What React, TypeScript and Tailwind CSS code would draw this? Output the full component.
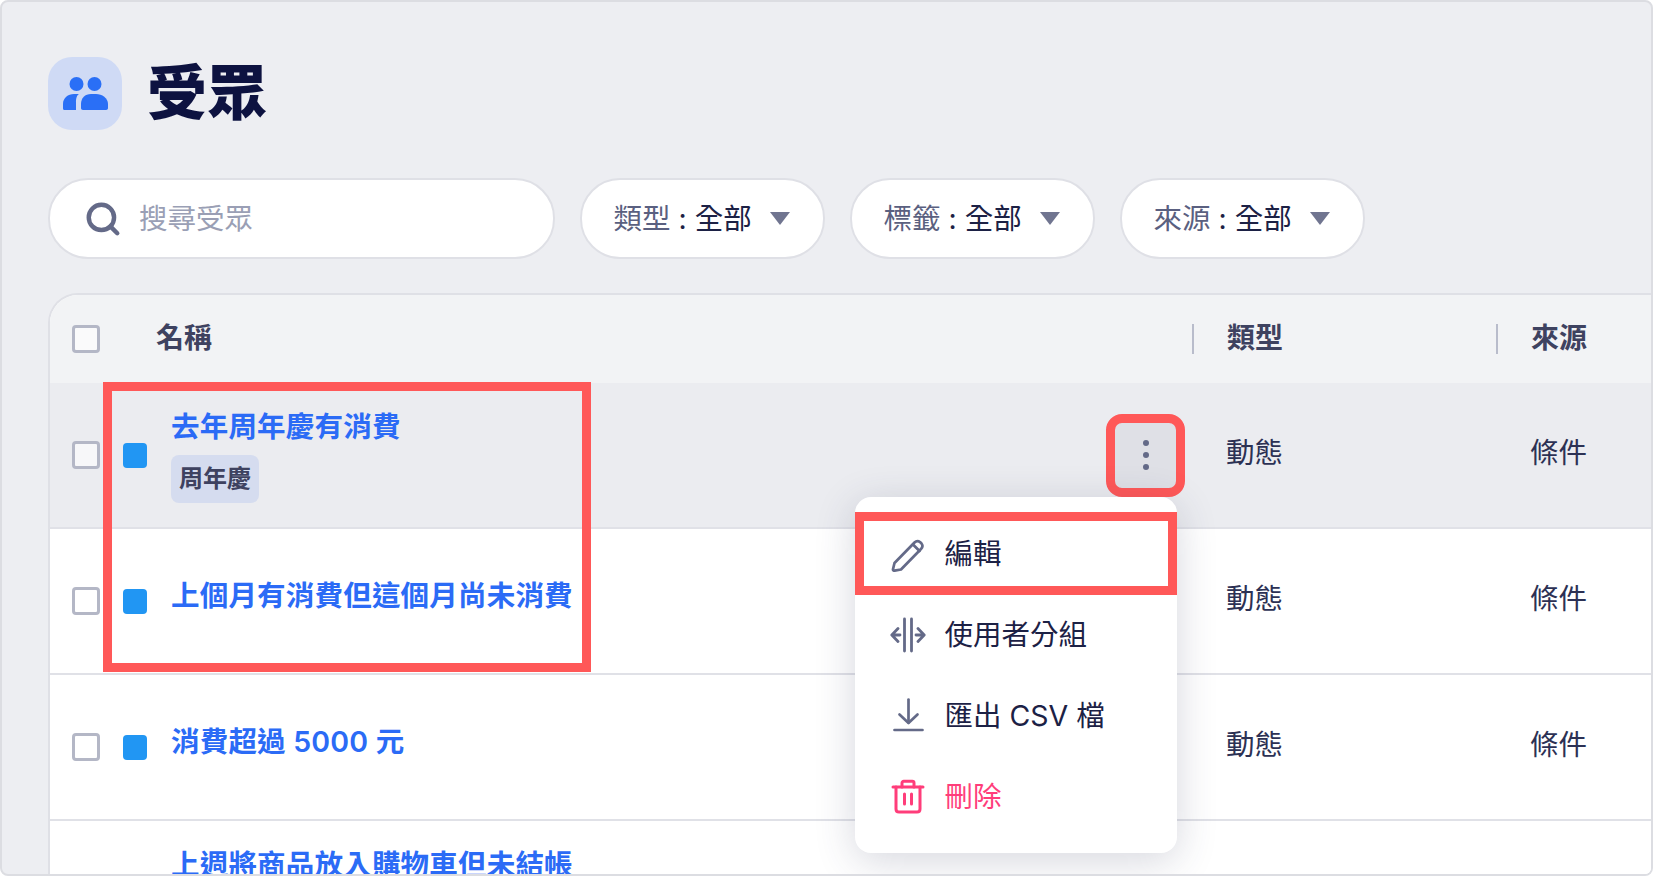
import { Search } from "lucide-react";

const FONT = "font-['Inter','Noto_Sans_CJK_TC',sans-serif]";

const FILTERS = [
  { label: "類型", value: "全部" },
  { label: "標籤", value: "全部" },
  { label: "來源", value: "全部" },
];

const ROWS = [
  { name: "去年周年慶有消費", tag: "周年慶", type: "動態", source: "條件", active: true },
  { name: "上個月有消費但這個月尚未消費", type: "動態", source: "條件" },
  { name: "消費超過 5000 元", type: "動態", source: "條件" },
  // last row is cut by the frame, only its title shows
  { name: "上週將商品放入購物車但未結帳", tall: true },
];

function PeopleIcon() {
  return (
    <svg width="46" height="34" viewBox="0 0 46 34" fill="#2a6ff6" className="ml-[1px]" aria-hidden="true">
      <circle cx="13.500" cy="7" r="7" />
      <circle cx="31.500" cy="7" r="7" />
      <path d="M1.500 33A1.500 1.500 0 0 1 0 31.500V27C0 21 5 17 11 17h5C13 19 13 23 13 26v7H1.500Z" />
      <path d="M18 27C18 21 22 17 28 17h5C39 17 45 21 45 27v4c0 1.200-.8 2-2 2H20c-1.200 0-2-.8-2-2v-4Z" />
    </svg>
  );
}

function PencilIcon() {
  return (
    <svg width="36" height="36" viewBox="0 0 36 36" fill="none" stroke="#646a88" strokeWidth="2.700" strokeLinejoin="round" strokeLinecap="round" aria-hidden="true">
      <path d="M4.500 27 24.500 6.500c1.500-1.500 3.500-2 5.500-.5l1.500 1.500c1.500 2 1 4-.5 5.500L11 33.500l-6.500 1.200c-1 .1-1.700-.6-1.500-1.500L4.500 27Z" />
      <path d="M23 8.500 29.500 15" />
    </svg>
  );
}

function SplitIcon() {
  return (
    <svg width="36" height="36" viewBox="0 0 36 36" fill="none" stroke="#646a88" strokeWidth="2.800" strokeLinecap="round" strokeLinejoin="round" aria-hidden="true">
      <path d="M14.500 2v32M21.500 2v32" />
      <path d="M10 18H2M8 11.500 1.800 18 8 24.500" />
      <path d="M26 18h8M28 11.500l6.200 6.500-6.200 6.500" />
    </svg>
  );
}

function DownloadIcon() {
  return (
    <svg width="36" height="36" viewBox="0 0 36 36" fill="none" stroke="#646a88" strokeWidth="2.700" strokeLinecap="round" strokeLinejoin="round" aria-hidden="true">
      <path d="M18.500 1.500v23" />
      <path d="M9.500 16.500l9 8.500 9-8.500" />
      <path d="M4.500 32h28" />
    </svg>
  );
}

function TrashIcon() {
  return (
    <svg width="36" height="36" viewBox="0 0 36 36" fill="none" stroke="#ff3d7a" strokeWidth="3" strokeLinecap="round" strokeLinejoin="round" aria-hidden="true">
      <path d="M3 8h30" />
      <path d="M12 8V4c0-1 .8-1.700 1.700-1.700h8.600c.9 0 1.700.7 1.700 1.700v4" />
      <path d="M6 8v22c0 1.800 1.200 3 3 3h18c1.800 0 3-1.200 3-3V8" />
      <path d="M14.500 15v10M21.500 15v10" />
    </svg>
  );
}

function Checkbox() {
  return <span className="block h-[28px] w-[28px] shrink-0 rounded-[4px] border-[3px] border-[#b4b7c6] bg-white/60" />;
}

function FilterPill({ label, value }: { label: string; value: string }) {
  return (
    <button className="flex h-[81px] w-[245.5px] items-center rounded-[40px] border-2 border-[#dfe0e6] bg-white pl-[32px] text-[28.5px]">
      <span className="pt-[2px] text-[#5a6080]">{label}</span>
      <span className="mx-[8px] pt-[2px] text-[#1c2145]">:</span>
      <span className="pt-[2px] text-[#1c2145]">{value}</span>
      <span className="ml-[18px] h-0 w-0 border-x-[10px] border-t-[13px] border-x-transparent border-t-[#707590]" />
    </button>
  );
}

function MenuItem({ icon, label, danger }: { icon: React.ReactNode; label: string; danger?: boolean }) {
  return (
    <div className="flex h-[81px] items-center gap-[18.500px] pl-[35px]">
      {icon}
      <span className={danger ? "pt-[2px] text-[28.5px] text-[#ff3d7a]" : "pt-[2px] text-[28.5px] text-[#1c2145]"}>{label}</span>
    </div>
  );
}

function TableRow({
  name,
  tag,
  type,
  source,
  active,
  tall,
}: {
  name: string;
  tag?: string;
  type?: string;
  source?: string;
  active?: boolean;
  tall?: boolean;
}) {
  return (
    <div className={`grid h-[146px] shrink-0 grid-cols-[1142px_304px_1fr] items-center border-b-2 border-[#e0e1e7] ${active ? "bg-[#ebecf0]" : "bg-white"}`}>
      <div className="flex items-center pl-[22px]">
        <Checkbox />
        <span className="ml-[23px] block h-[25px] w-[24px] shrink-0 rounded-[4px] bg-[#2196f3]" />
        <div className={`ml-[24px] flex flex-col items-start gap-[9px] ${tag || tall ? "" : "pb-[10px]"}`}>
          <span className="text-[28.5px] leading-[38px] font-semibold tracking-[0.2px] text-[#2b6bf6]">{name}</span>
          {tag && (
            <span className="flex h-[48px] w-[88px] items-center justify-center rounded-[8px] bg-[#d5dcef] text-[24px] font-semibold text-[#3e4260]">
              {tag}
            </span>
          )}
          {tall && <span className="block h-[48px]" />}
        </div>
        {active && (
          <button className="mr-[7px] ml-auto flex h-[83px] w-[79px] flex-col items-center justify-center gap-[6px] rounded-[16px] border-[9px] border-[#ff5858] bg-[#dfe0e6]">
            <span className="h-[6px] w-[6px] rounded-full bg-[#646a88]" />
            <span className="h-[6px] w-[6px] rounded-full bg-[#646a88]" />
            <span className="h-[6px] w-[6px] rounded-full bg-[#646a88]" />
          </button>
        )}
      </div>
      <span className="pb-[4px] pl-[34px] text-[28.5px] text-[#2c3154]">{type}</span>
      <span className="pb-[4px] pl-[34px] text-[28.5px] text-[#2c3154]">{source}</span>
    </div>
  );
}

export default function App() {
  return (
    <div className={`${FONT} h-[876px] w-full overflow-hidden bg-white`}>
      <div className="relative h-[876px] overflow-hidden rounded-[8px] border-2 border-[#dcdde2] bg-[#edeef2] pt-[55px] pl-[46px]">
        {/* Page title */}
        <div className="flex h-[73px] items-center gap-[25px]">
          <div className="flex h-[73px] w-[74px] items-center justify-center rounded-[24px] bg-[#cfdaf5]">
            <PeopleIcon />
          </div>
          <h1 className="pb-[2px] text-[60px] leading-none font-black text-[#0d1240]">受眾</h1>
        </div>

        {/* Search + filters */}
        <div className="mt-[48px] flex gap-[24.5px]">
          <label className="flex h-[81px] w-[507px] items-center rounded-[40px] border-2 border-[#dfe0e6] bg-white pl-[34px]">
            <Search size={38} strokeWidth={2.8} color="#646a88" className="shrink-0" />
            <input
              placeholder="搜尋受眾"
              className="ml-[17px] min-w-0 flex-1 pt-[1px] text-[28.5px] outline-none placeholder:text-[#9a9fb5]"
            />
          </label>
          {FILTERS.map((f) => (
            <FilterPill key={f.label} label={f.label} value={f.value} />
          ))}
        </div>

        {/* Table */}
        <div className="mt-[34px] flex flex-col overflow-hidden rounded-tl-[30px] border-t-2 border-l-2 border-[#dfe0e6] bg-white">
          <div className="grid h-[88px] shrink-0 grid-cols-[1142px_304px_1fr] items-center bg-[#f2f3f5] text-[28px] font-semibold text-[#3e4260]">
            <div className="flex items-center pl-[22px]">
              <Checkbox />
              <span className="ml-[56px] pb-[2px]">名稱</span>
            </div>
            <div className="flex h-[30px] items-center border-l-2 border-[#b9bccb] pb-[2px] pl-[33px]">類型</div>
            <div className="flex h-[30px] items-center border-l-2 border-[#b9bccb] pb-[2px] pl-[33px]">來源</div>
          </div>
          {ROWS.map((r) => (
            <TableRow key={r.name} {...r} />
          ))}
        </div>

        {/* Annotation over the name column */}
        <div className="absolute top-[380px] left-[101px] h-[290px] w-[488px] border-[9px] border-[#ff5858]" />

        {/* Row action menu */}
        <div className="absolute top-[495px] left-[853px] w-[322px] rounded-[16px] bg-white py-[16px] shadow-[0_8px_40px_rgba(50,55,90,0.2)]">
          <MenuItem icon={<PencilIcon />} label="編輯" />
          <MenuItem icon={<SplitIcon />} label="使用者分組" />
          <MenuItem icon={<DownloadIcon />} label="匯出 CSV 檔" />
          <MenuItem icon={<TrashIcon />} label="刪除" danger />
          <div className="absolute top-[15px] right-0 left-0 h-[83px] border-[9px] border-[#ff5858]" />
        </div>
      </div>
    </div>
  );
}
